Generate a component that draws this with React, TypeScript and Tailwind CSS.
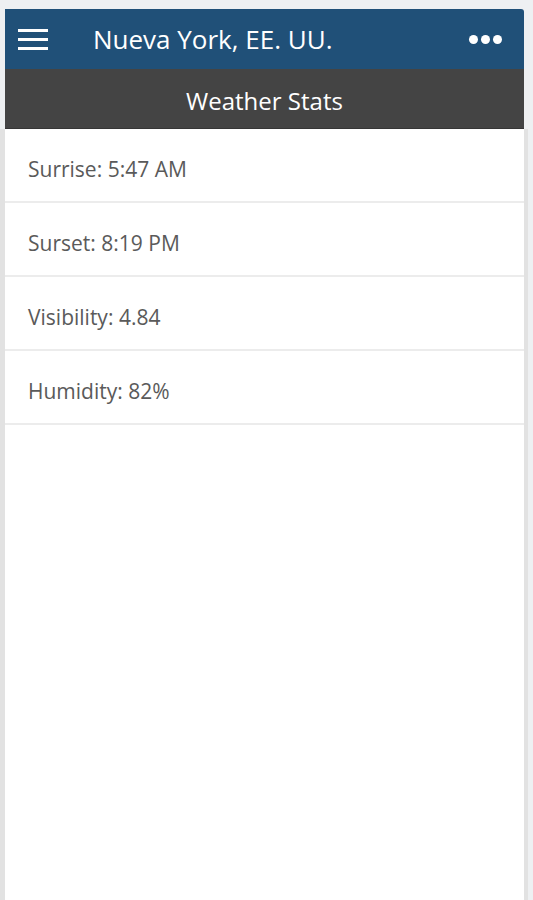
const stats = [
  { label: 'Surrise', value: '5:47 AM' },
  { label: 'Surset', value: '8:19 PM' },
  { label: 'Visibility', value: '4.84' },
  { label: 'Humidity', value: '82%' },
]

export default function App() {
  return (
    <div
      className="flex h-screen flex-col bg-[#eef0f2] pt-[9px]"
      style={{ fontFamily: '"Open Sans", "Noto Sans", sans-serif' }}
    >
      {/* Header */}
      <div className="ml-[5px] w-[519px] overflow-hidden rounded-tr-[3px]">
        <div className="flex h-[60px] items-center bg-[#205078] pl-[13px] pr-[22px]">
          <div className="flex w-[30px] flex-col gap-[6px]">
            <span className="block h-[3px] bg-white" />
            <span className="block h-[3px] bg-white" />
            <span className="block h-[3px] bg-white" />
          </div>
          <h1 className="ml-[45px] flex-1 text-[26px] leading-none text-white">Nueva York, EE. UU.</h1>
          <div className="flex gap-[3px]">
            <span className="block h-[9px] w-[9px] rounded-full bg-white" />
            <span className="block h-[9px] w-[9px] rounded-full bg-white" />
            <span className="block h-[9px] w-[9px] rounded-full bg-white" />
          </div>
        </div>
        <div className="flex h-[60px] items-center justify-center border-b border-[#363636] bg-[#444444] pt-[5px]">
          <h2 className="text-[24px] leading-none text-white">Weather Stats</h2>
        </div>
      </div>

      {/* Stats list */}
      <div className="w-[528px] flex-1 border-l-[5px] border-r-[4px] border-[#e2e2e2] bg-white">
        {stats.map(({ label, value }) => (
          <div
            key={label}
            className="flex h-[74px] items-center border-b-2 border-[#ececec] pl-[23px] pt-[10px] text-[21px] text-[#5a5a5a]"
          >
            {label}: {value}
          </div>
        ))}
      </div>
    </div>
  )
}
